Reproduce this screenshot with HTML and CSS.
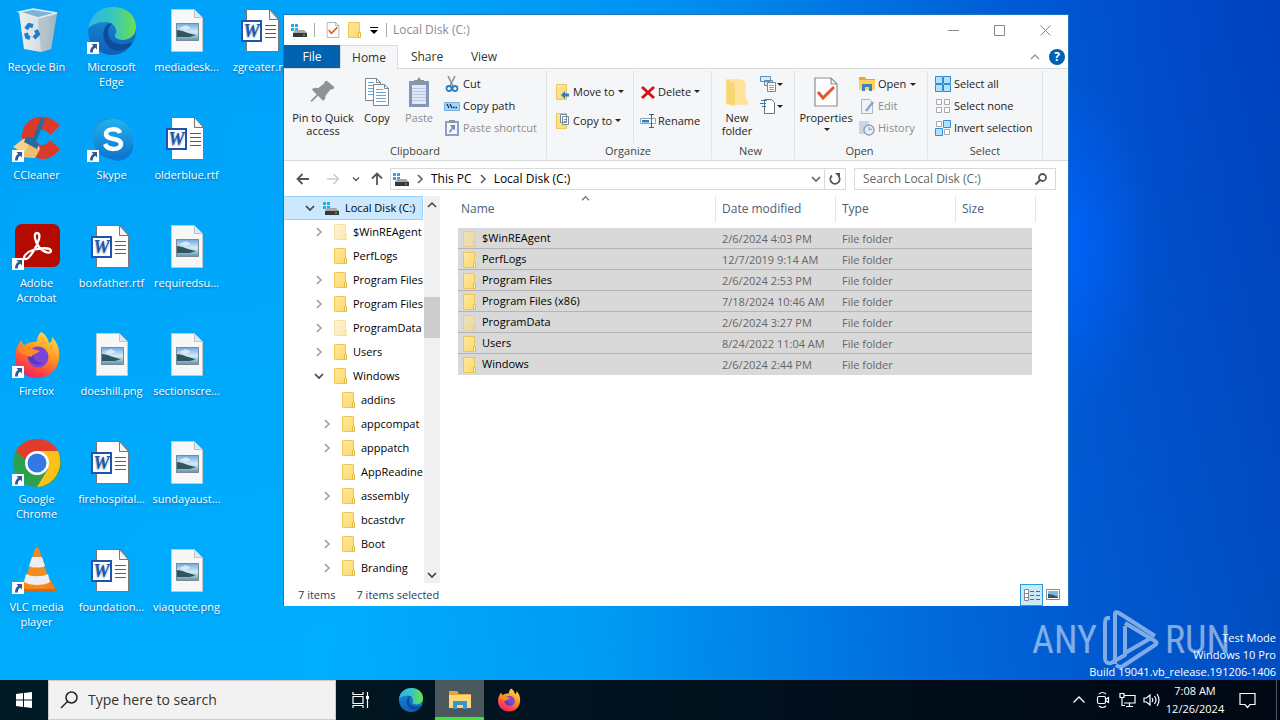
FILE: index.html
```html
<!DOCTYPE html>
<html lang="en">
<head>
<meta charset="utf-8">
<title>Local Disk (C:)</title>
<link rel="stylesheet" href="styles.css">
</head>
<body>
<svg class="sprite" aria-hidden="true">
  <defs>
    <linearGradient id="gEdgeA" x1="0" y1="0" x2="1" y2="0"><stop offset="0" stop-color="#2fb6e8"/><stop offset=".5" stop-color="#37c6c0"/><stop offset="1" stop-color="#6be04a"/></linearGradient>
    <linearGradient id="gEdgeB" x1="0" y1="0" x2="0" y2="1"><stop offset="0" stop-color="#1a8fdc"/><stop offset="1" stop-color="#0f5fb8"/></linearGradient>
    <linearGradient id="gSkype" x1="0" y1="0" x2="0" y2="1"><stop offset="0" stop-color="#22b2ec"/><stop offset="1" stop-color="#0b74cf"/></linearGradient>
    <linearGradient id="gFox" x1=".8" y1="0" x2=".3" y2="1"><stop offset="0" stop-color="#ffe14a"/><stop offset=".45" stop-color="#ff9322"/><stop offset=".75" stop-color="#ff4a3e"/><stop offset="1" stop-color="#e8206e"/></linearGradient>
    <linearGradient id="gFolder" x1="0" y1="0" x2="1" y2="1"><stop offset="0" stop-color="#ffe9a3"/><stop offset="1" stop-color="#fbd867"/></linearGradient>
    <linearGradient id="gPhoto" x1="0" y1="0" x2="0" y2="1"><stop offset="0" stop-color="#6fa8e6"/><stop offset=".5" stop-color="#d6ecf5"/><stop offset="1" stop-color="#5c93ad"/></linearGradient>
    <linearGradient id="gBin" x1="0" y1="0" x2="1" y2="0"><stop offset="0" stop-color="#eceff2"/><stop offset=".65" stop-color="#d3dade"/><stop offset="1" stop-color="#8ea7b5"/></linearGradient>
  </defs>
  <symbol id="arrow-badge" viewBox="0 0 12 12"><path fill="#fff" d="M0 0h12v12H0z"/><path fill="#2d5a9c" d="M4.500 2H10v5.500L8.300 5.800C6.500 6.800 5.800 8 5.800 10.500H3C3 7.500 4 5.500 6.300 3.800z"/></symbol>
  <symbol id="bin" viewBox="0 0 48 48"><path fill="url(#gBin)" d="M6 5l19 5 19-4-6 36-10 3-17-3z"/><path fill="#a8bac4" d="M25 10l19-4-6 36-10 3z" opacity=".7"/><path fill="#7fb4d6" stroke="#e6edf2" stroke-width="1.500" d="M6 5l14-3 24 4-19 5z"/><g fill="none" stroke="#1b7fd0" stroke-width="4"><path d="M13 22l3-4 4 1M23 23l2 4-4 4M17 31l-3-1-1-4"/></g></symbol>
  <symbol id="edge" viewBox="0 0 48 48"><circle cx="24" cy="24" r="24" fill="url(#gEdgeB)"/><path fill="url(#gEdgeA)" d="M0 22C2 8 12 0 25 0c14 0 23 9 23 20 0 8-6 13-13 13-6 0-9-3-8-5 3-3 1-12-9-13-8 0-15 3-18 7z"/><path fill="#0d4c9a" d="M20 17c-7 5-6 17 2 24 5 4 13 4 20-2 2-2 2-4-1-3-10 4-21-1-21-10 0-4 1-7 4-9-1-1-3-1-4 0z"/></symbol>
  <symbol id="word" viewBox="0 0 48 48"><path fill="#fff" stroke="#777" d="M8.500 2.500h23l9 10v32h-32z"/><path fill="#f3f3f3" stroke="#777" d="M31.500 2.500v10h9z"/><path stroke="#2b66b5" stroke-width="1.200" d="M27 18.500h11M27 22.500h11M27 26.500h11M27 30.500h11"/><path fill="#fff" stroke="#1d55ad" stroke-width="2" d="M4 14h19v20H4z"/><text x="13.500" y="30" text-anchor="middle" class="word-letter">W</text></symbol>
  <symbol id="photo" viewBox="0 0 48 48"><path fill="#f7f7f7" stroke="#c2c9cd" d="M8.500 2.500h23l8 8v34h-31z"/><path fill="#dfe8ec" stroke="#b8c4ca" d="M31.500 2.500v8h8z"/><path fill="url(#gPhoto)" stroke="#7d8a93" d="M13.500 16.500h22v17h-22z"/><path fill="#fff" d="M16 21l7-3 5 3-6 2z" opacity=".6"/><path fill="#2f5560" d="M14 23c5 0 12 4 19 5l-6 2H14z"/></symbol>
  <symbol id="ccleaner" viewBox="0 0 48 48"><path fill="#d93a2b" d="M47 11C37-3 11-2 9 20c-1 18 15 27 27 23 5-2 8-5 11-9l-10-9c-5 8-14 6-14-3 0-8 10-10 14-2z"/><path fill="#f7d28c" d="M0 32l10-8c8-1 14 1 17 10l-5 9-13-1-2-6z"/><path fill="#eaaf5a" d="M10 41l6-12 11 5-5 9z" opacity=".6"/><path fill="#276a9d" d="M28 3l4 1-9 23 3 2-2 5-13-7 2-5 7 1z"/></symbol>
  <symbol id="skype" viewBox="0 0 48 48"><circle cx="19" cy="18" r="15" fill="#159be0"/><circle cx="30" cy="31" r="15" fill="#0d79d4"/><circle cx="25" cy="24" r="20" fill="url(#gSkype)"/><path fill="none" stroke="#fff" stroke-width="4.500" d="M32 18c-2-5-14-5-14 1 0 7 15 3 15 10 0 6-13 7-16 0"/></symbol>
  <symbol id="acrobat" viewBox="0 0 48 48"><rect x="2" y="1" width="45" height="43" rx="7" fill="#b30b00"/><path fill="none" stroke="#fff" stroke-width="2.300" d="M24 10c-4 0-2 9 2 14 5 6 12 7 12 4 0-4-12-3-18-1-7 2-11 8-8 9 4 1 12-12 14-20 1-4 0-6-2-6z"/></symbol>
  <symbol id="firefox" viewBox="0 0 48 48"><path fill="url(#gFox)" d="M28 1c4 2 7 6 8 11 3 0 3-4 3-6 6 6 8 13 7 21-1 12-10 20-22 20S2 38 2 26C2 18 5 13 9 9c0 3 1 5 3 5 4-4 9-2 12-4 0-3 1-6 4-9z"/><circle cx="25" cy="26" r="10.500" fill="#7a45d8"/><path fill="#5b34b8" d="M15 25c1 8 10 10 15 7-6 0-10-3-10-8z"/><path fill="#ff8a24" d="M5 17c7-3 14 1 22 3-4 3-7 3-9 6-5-1-10-3-13-9z"/></symbol>
  <symbol id="chrome" viewBox="0 0 48 48"><circle cx="24" cy="24" r="24" fill="#2da04d"/><path fill="#fbc116" d="M24 12h21c7 16-3 35-21 36l11-18z"/><path fill="#e33b2e" d="M3 12C12-4 37-4 45 12H24c-6 0-10 4-11 9z"/><circle cx="24" cy="24" r="12" fill="#fff"/><circle cx="24" cy="24" r="9.500" fill="#3577e5"/></symbol>
  <symbol id="vlc" viewBox="0 0 48 48"><path fill="#f08316" d="M11 32h26l7 13H4z"/><path fill="#d86a0a" d="M4 45l2-3h37l1 3z"/><path fill="#f58a1f" d="M22 2q2-3 4 0l11 35c-4 6-22 6-26 0z"/><path fill="#eee" d="M19 10h10l3 9c-3 2-13 2-16 0zM13 27c6 3 16 3 22 0l2 8c-6 4-20 4-26 0z"/></symbol>
  <symbol id="drive" viewBox="0 0 16 16"><path fill="#1fb0e8" d="M0 2h3v3H0zM4 2h3v3H4zM0 6h3v3H0zM4 6h3v2H4z"/><path fill="#a4a8ab" d="M4 8h9l3 3H2z"/><path fill="#34383b" d="M2 11h14v4H2z"/><path fill="#60d860" d="M12 12.500h2v1h-2z"/></symbol>
  <symbol id="folder" viewBox="0 0 14 16"><path fill="url(#gFolder)" stroke="#edc657" d="M.5.5h11v10l1 1v4H.5z"/><path fill="#fdf3c9" stroke="#e6ba46" d="M10.500 10.500h2v5h-2z"/></symbol>
  <symbol id="sheet-check" viewBox="0 0 24 30"><path fill="#fff" stroke="#8b8f93" stroke-width="1.200" d="M1 1h16l6 6v22H1zM17 1v6h6"/><path fill="none" stroke="#e4572e" stroke-width="3" d="M4 15l5 6L20 10"/></symbol>
  <symbol id="pin" viewBox="0 0 24 24"><path fill="#8b9398" d="M15 3l6 5q0 2-3 2l-4 5q0 3-2 4l-4-4-5 5-1-1 5-5-4-4q2-2 5-1l5-4q0-2 2-2z"/></symbol>
  <symbol id="copy" viewBox="0 0 26 30"><g fill="#fff" stroke="#7e878d"><path d="M1.500 1.500h11l4 4v18h-15zM12.500 1.500v4h4"/><path d="M9.500 7.500h11l4 4v17h-15zM20.500 7.500v4h4"/></g><path stroke="#6fa3dc" d="M4 5.500h6M4 8.500h5M4 11.500h5M4 14.500h5M4 17.500h5M12 12.500h7M12 15.500h10M12 18.500h10M12 21.500h10M12 24.500h10"/></symbol>
  <symbol id="paste" viewBox="0 0 22 30"><path fill="#8296b7" d="M1 4h20v26H1z"/><path fill="#e1e7f4" d="M4 8h14v19H4z"/><path fill="#8b959c" d="M6 3h3l2-3 2 3h3v4H6z"/><path stroke="#b9c7e0" d="M4 11.500h14M4 14.500h14M4 17.500h14M4 20.500h14M4 23.500h14"/></symbol>
  <symbol id="cut" viewBox="0 0 16 16"><path fill="none" stroke="#888f94" stroke-width="1.500" d="M4 0l5 10M11 0L6 10"/><g fill="none" stroke="#2f7fc0" stroke-width="1.800"><circle cx="5" cy="12.500" r="2.500"/><circle cx="11" cy="12.500" r="2.500"/></g></symbol>
  <symbol id="path" viewBox="0 0 16 16"><path fill="#a9d3f5" stroke="#73b2e6" d="M.5 4.500h15v8H.5z"/><path stroke="#16314d" stroke-width="1.300" d="M3 6l2 4M6 6l2 4M9 9.500h1.500M11.500 9.500H13"/></symbol>
  <symbol id="shortcut" viewBox="0 0 16 16"><path fill="none" stroke="#8ba0c2" stroke-width="2" d="M2 2h12v13H2z"/><path fill="#8b959c" d="M5 0h6v3H5z"/><path fill="#6c8dbf" d="M6 5h5v5L9 9l-3 4-1-2 3-3z"/></symbol>
  <symbol id="moveto" viewBox="0 0 16 16"><path fill="url(#gFolder)" stroke="#edc657" d="M1.500.5h10v15h-10z"/><path fill="#2c7fc4" d="M6 11l4-4v2.500h4v3h-4V15z"/></symbol>
  <symbol id="copyto" viewBox="0 0 16 16"><path fill="url(#gFolder)" stroke="#edc657" d="M1.500.5h10v15h-10z"/><path fill="#fff" stroke="#73889a" d="M5.500 1.500h6v8h-6zM7.500 3.500h6v8h-6z"/><path stroke="#5a93cf" d="M9 6.500h3M9 8.500h3"/></symbol>
  <symbol id="delete" viewBox="0 0 16 16"><path fill="none" stroke="#d4151c" stroke-width="3" d="M2 3l12 11M14 3L2 14"/></symbol>
  <symbol id="rename" viewBox="0 0 16 16"><path fill="#fff" stroke="#8fa6b8" d="M.5 5.500h15v5H.5z"/><path fill="#2c7fc4" d="M2 7h7v2.500H2z"/><path fill="none" stroke="#555c61" d="M9 1.500h5M11.500 1.500v13M9 14.500h5"/></symbol>
  <symbol id="bigfolder" viewBox="0 0 24 28"><path fill="#fde49a" d="M2 2h14l4 3v15l2 2v4H2z"/><path fill="#f8d676" d="M2 2l8 4v21l-8-2z"/></symbol>
  <symbol id="newitem" viewBox="0 0 16 16"><path fill="#dcebf7" stroke="#5d8fb5" d="M.5.5h10v5H.5zM4.500 4.500h8v5h-8z"/><path fill="#fff" stroke="#7c868d" d="M7.500 6.500h8v9h-8z"/><path stroke="#9aa3a9" d="M9 9.500h5M9 11.500h5M9 13.500h5"/></symbol>
  <symbol id="easy" viewBox="0 0 16 16"><path fill="#fff" stroke="#6c757b" d="M4.500 1.500h7l3 3v11h-10z"/><path stroke="#2c7fc4" d="M1 2.500h6M0 5.500h6M2 8.500h4"/></symbol>
  <symbol id="open" viewBox="0 0 16 16"><path fill="#e8a824" d="M0 1h6l1 2h9v4H0z"/><path fill="#ffd257" d="M0 4h16v10H0z"/><path fill="#3a82c4" d="M3 8h10v7h-3v-4H6v4H3z"/></symbol>
  <symbol id="edit" viewBox="0 0 16 16"><path fill="#eef2f9" stroke="#a9b6cb" d="M2.500 1.500h8l3 3v11h-11z"/><path stroke="#90a4c6" stroke-width="2.500" d="M14 4l-7 9"/></symbol>
  <symbol id="history" viewBox="0 0 16 16"><path fill="#ccd5e4" d="M0 1h10v13H0z"/><circle cx="10" cy="10" r="5" fill="#e8eef8" stroke="#8fa2c3" stroke-width="1.500"/><path fill="none" stroke="#8094b8" d="M10 7v3l3-1"/></symbol>
  <symbol id="selall" viewBox="0 0 16 16"><path fill="#b5e0fb" stroke="#2b8fd6" d="M.5.5h7v7h-7zM8.500.5h7v7h-7zM.5 8.500h7v7h-7zM8.500 8.500h7v7h-7z"/></symbol>
  <symbol id="selnone" viewBox="0 0 16 16"><path fill="#fff" stroke="#a5a9ac" d="M1.500 1.500h5v5h-5zM9.500 1.500h5v5h-5zM1.500 9.500h5v5h-5zM9.500 9.500h5v5h-5z"/></symbol>
  <symbol id="selinv" viewBox="0 0 16 16"><path fill="#fff" stroke="#a5a9ac" d="M1.500 1.500h5v5h-5zM9.500 9.500h5v5h-5z"/><path fill="#b5e0fb" stroke="#2b8fd6" d="M8.500.5h7v7h-7zM.5 8.500h7v7h-7z"/></symbol>
  <symbol id="chev-r" viewBox="0 0 8 10"><path fill="none" stroke="currentColor" stroke-width="1.700" d="M2 1l4 4-4 4"/></symbol>
  <symbol id="chev-d" viewBox="0 0 10 8"><path fill="none" stroke="currentColor" stroke-width="1.700" d="M1 2l4 4 4-4"/></symbol>
  <symbol id="chev-u" viewBox="0 0 10 8"><path fill="none" stroke="currentColor" stroke-width="1.500" d="M1 6l4-4 4 4"/></symbol>
  <symbol id="left" viewBox="0 0 14 14"><path fill="none" stroke="currentColor" stroke-width="1.800" d="M13 7H2M6.500 2l-5 5 5 5"/></symbol>
  <symbol id="right" viewBox="0 0 14 14"><path fill="none" stroke="currentColor" stroke-width="1.500" d="M1 7h11M7.500 2l5 5-5 5"/></symbol>
  <symbol id="up" viewBox="0 0 14 14"><path fill="none" stroke="currentColor" stroke-width="1.800" d="M7 13V2M2 6.500l5-5 5 5"/></symbol>
  <symbol id="lens" viewBox="0 0 20 20"><circle cx="12.500" cy="7.500" r="5.500" fill="none" stroke="currentColor" stroke-width="1.500"/><path stroke="currentColor" stroke-width="1.500" d="M8.500 11.500L2 18"/></symbol>
  <symbol id="lens-bold" viewBox="0 0 14 14"><circle cx="8.500" cy="5.500" r="3.500" fill="none" stroke="currentColor" stroke-width="1.800"/><path stroke="currentColor" stroke-width="2.200" d="M6 8l-4.500 4.500"/></symbol>
  <symbol id="explorer" viewBox="0 0 24 24"><path fill="#e8a33a" d="M1 3h8l2 3h12v5H1z"/><path fill="#ffd977" d="M1 7h22v13H1z"/><path fill="#3a94cc" d="M5 13h14v8h-4v-4H9v4H5z"/></symbol>
</svg>

<main class="desktop">
  <div class="shortcuts">
    <a class="shortcut" href="#"><svg class="ico48"><use href="#bin"/></svg><span>Recycle Bin</span></a>
    <a class="shortcut" href="#"><svg class="ico48"><use href="#ccleaner"/></svg><svg class="badge"><use href="#arrow-badge"/></svg><span>CCleaner</span></a>
    <a class="shortcut" href="#"><svg class="ico48"><use href="#acrobat"/></svg><svg class="badge"><use href="#arrow-badge"/></svg><span>Adobe Acrobat</span></a>
    <a class="shortcut" href="#"><svg class="ico48"><use href="#firefox"/></svg><svg class="badge"><use href="#arrow-badge"/></svg><span>Firefox</span></a>
    <a class="shortcut" href="#"><svg class="ico48"><use href="#chrome"/></svg><svg class="badge"><use href="#arrow-badge"/></svg><span>Google Chrome</span></a>
    <a class="shortcut" href="#"><svg class="ico48"><use href="#vlc"/></svg><svg class="badge"><use href="#arrow-badge"/></svg><span>VLC media player</span></a>
    <a class="shortcut" href="#"><svg class="ico48"><use href="#edge"/></svg><svg class="badge"><use href="#arrow-badge"/></svg><span>Microsoft Edge</span></a>
    <a class="shortcut" href="#"><svg class="ico48"><use href="#skype"/></svg><svg class="badge"><use href="#arrow-badge"/></svg><span>Skype</span></a>
    <a class="shortcut" href="#"><svg class="ico48"><use href="#word"/></svg><span>boxfather.rtf</span></a>
    <a class="shortcut" href="#"><svg class="ico48"><use href="#photo"/></svg><span>doeshill.png</span></a>
    <a class="shortcut" href="#"><svg class="ico48"><use href="#word"/></svg><span>firehospital...</span></a>
    <a class="shortcut" href="#"><svg class="ico48"><use href="#word"/></svg><span>foundation...</span></a>
    <a class="shortcut" href="#"><svg class="ico48"><use href="#photo"/></svg><span>mediadesk...</span></a>
    <a class="shortcut" href="#"><svg class="ico48"><use href="#word"/></svg><span>olderblue.rtf</span></a>
    <a class="shortcut" href="#"><svg class="ico48"><use href="#photo"/></svg><span>requiredsu...</span></a>
    <a class="shortcut" href="#"><svg class="ico48"><use href="#photo"/></svg><span>sectionscre...</span></a>
    <a class="shortcut" href="#"><svg class="ico48"><use href="#photo"/></svg><span>sundayaust...</span></a>
    <a class="shortcut" href="#"><svg class="ico48"><use href="#photo"/></svg><span>viaquote.png</span></a>
    <a class="shortcut" href="#"><svg class="ico48"><use href="#word"/></svg><span>zgreater.rtf</span></a>
  </div>

  <div class="watermark">
    <span>ANY</span>
    <svg viewBox="0 0 56 60" class="wm-logo"><g fill="none" stroke="#fff" stroke-width="4" stroke-linejoin="round"><path d="M7 8H4Q2 9 2 14v34q0 6 6 5l14-8V16"/><path d="M12 54V4q0-3 4-1l36 23M13 55q3 3 7 1l32-21q3-2 0-4L22 13"/><path d="M22 43l26-15"/></g></svg>
    <span>RUN</span>
  </div>
  <div class="build"><div>Test Mode</div><div>Windows 10 Pro</div><div>Build 19041.vb_release.191206-1406</div></div>

  <section class="window">
    <header class="titlebar">
      <svg class="ico16"><use href="#drive"/></svg><i class="bar"></i>
      <button class="quick" aria-label="Properties"><svg class="ico16"><use href="#sheet-check"/></svg></button>
      <button class="quick" aria-label="New folder"><svg class="ico16"><use href="#folder"/></svg></button>
      <button class="quick small" aria-label="Customize"><svg width="8" height="8" viewBox="0 0 8 8"><path d="M0 1h8v1H0zM0 4h8L4 8z"/></svg></button><i class="bar"></i>
      <h1>Local Disk (C:)</h1>
      <div class="controls">
        <button aria-label="Minimize"><svg width="11" height="11" viewBox="0 0 11 11"><path stroke="#888" d="M0 5.500h11"/></svg></button>
        <button aria-label="Maximize"><svg width="11" height="11" viewBox="0 0 11 11"><path fill="none" stroke="#888" d="M.5.5h10v10H.5z"/></svg></button>
        <button aria-label="Close"><svg width="11" height="11" viewBox="0 0 11 11"><path stroke="#888" d="M.5.5l10 10M10.500.5l-10 10"/></svg></button>
      </div>
    </header>
    <nav class="tabs">
      <button class="tab file">File</button><button class="tab active">Home</button><button class="tab share">Share</button><button class="tab">View</button>
      <span class="tabs-right"><button aria-label="Collapse"><svg class="chev-h"><use href="#chev-u"/></svg></button><button class="help" aria-label="Help">?</button></span>
    </nav>

    <div class="ribbon">
      <section class="group clipboard"><div class="tools">
        <button class="big"><svg width="30" height="30"><use href="#pin"/></svg><span>Pin to Quick access</span></button>
        <button class="big"><svg width="26" height="30"><use href="#copy"/></svg><span>Copy</span></button>
        <button class="big off"><svg width="22" height="30"><use href="#paste"/></svg><span>Paste</span></button>
        <div class="stack"><button><svg class="ico16"><use href="#cut"/></svg>Cut</button><button><svg class="ico16"><use href="#path"/></svg>Copy path</button><button class="off"><svg class="ico16"><use href="#shortcut"/></svg>Paste shortcut</button></div>
      </div><h2>Clipboard</h2></section>
      <section class="group organize"><div class="tools">
        <div class="stack wide"><button><svg class="ico16"><use href="#moveto"/></svg>Move to<i class="caret"></i></button><button><svg class="ico16"><use href="#copyto"/></svg>Copy to<i class="caret"></i></button></div>
        <div class="stack wide split"><button><svg class="ico16"><use href="#delete"/></svg>Delete<i class="caret"></i></button><button><svg class="ico16"><use href="#rename"/></svg>Rename</button></div>
      </div><h2>Organize</h2></section>
      <section class="group new"><div class="tools">
        <button class="big"><svg width="26" height="30"><use href="#bigfolder"/></svg><span>New folder</span></button>
        <div class="stack"><button aria-label="New item"><svg class="ico16"><use href="#newitem"/></svg><i class="caret"></i></button><button aria-label="Easy access"><svg class="ico16"><use href="#easy"/></svg><i class="caret"></i></button></div>
      </div><h2>New</h2></section>
      <section class="group open"><div class="tools">
        <button class="big"><svg width="24" height="30"><use href="#sheet-check"/></svg><span>Properties</span><i class="caret"></i></button>
        <div class="stack"><button><svg class="ico16"><use href="#open"/></svg>Open<i class="caret"></i></button><button class="off"><svg class="ico16"><use href="#edit"/></svg>Edit</button><button class="off"><svg class="ico16"><use href="#history"/></svg>History</button></div>
      </div><h2>Open</h2></section>
      <section class="group select"><div class="tools">
        <div class="stack"><button><svg class="ico16"><use href="#selall"/></svg>Select all</button><button><svg class="ico16"><use href="#selnone"/></svg>Select none</button><button><svg class="ico16"><use href="#selinv"/></svg>Invert selection</button></div>
      </div><h2>Select</h2></section>
    </div>

    <div class="location">
      <div class="nav">
        <button aria-label="Back"><svg class="ico14"><use href="#left"/></svg></button>
        <button aria-label="Forward" class="faint"><svg class="ico14"><use href="#right"/></svg></button>
        <button aria-label="Recent"><svg class="chev-s"><use href="#chev-d"/></svg></button>
        <button aria-label="Up"><svg class="ico14"><use href="#up"/></svg></button>
      </div>
      <div class="address">
        <svg class="ico16"><use href="#drive"/></svg><svg class="chev-v"><use href="#chev-r"/></svg><a href="#">This PC</a><svg class="chev-v"><use href="#chev-r"/></svg><a href="#">Local Disk (C:)</a>
        <button class="drop" aria-label="Previous locations"><svg class="chev-h"><use href="#chev-d"/></svg></button>
        <button class="refresh" aria-label="Refresh"><svg width="12" height="12" viewBox="0 0 12 12"><path fill="none" stroke="#555" stroke-width="1.700" d="M3 2.500A4.700 4.700 0 1 0 9.500 3"/><path fill="#555" d="M6 0h5v5z"/></svg></button>
      </div>
      <div class="search"><input type="text" aria-label="Search Local Disk (C:)" placeholder="Search Local Disk (C:)"><svg width="14" height="14"><use href="#lens-bold"/></svg></div>
    </div>

    <div class="body">
      <ul class="tree">
        <li class="root"><svg class="chev-h"><use href="#chev-d"/></svg><svg class="ico16"><use href="#drive"/></svg>Local Disk (C:)</li>
        <li><svg class="chev-v"><use href="#chev-r"/></svg><svg class="fold hidden-dir"><use href="#folder"/></svg>$WinREAgent</li>
        <li><i class="chev-v"></i><svg class="fold"><use href="#folder"/></svg>PerfLogs</li>
        <li><svg class="chev-v"><use href="#chev-r"/></svg><svg class="fold"><use href="#folder"/></svg>Program Files</li>
        <li><svg class="chev-v"><use href="#chev-r"/></svg><svg class="fold"><use href="#folder"/></svg>Program Files (x86)</li>
        <li><svg class="chev-v"><use href="#chev-r"/></svg><svg class="fold hidden-dir"><use href="#folder"/></svg>ProgramData</li>
        <li><svg class="chev-v"><use href="#chev-r"/></svg><svg class="fold"><use href="#folder"/></svg>Users</li>
        <li class="expanded"><svg class="chev-h"><use href="#chev-d"/></svg><svg class="fold"><use href="#folder"/></svg>Windows</li>
        <li class="deep"><i class="chev-v"></i><svg class="fold"><use href="#folder"/></svg>addins</li>
        <li class="deep"><svg class="chev-v"><use href="#chev-r"/></svg><svg class="fold"><use href="#folder"/></svg>appcompat</li>
        <li class="deep"><svg class="chev-v"><use href="#chev-r"/></svg><svg class="fold"><use href="#folder"/></svg>apppatch</li>
        <li class="deep"><i class="chev-v"></i><svg class="fold"><use href="#folder"/></svg>AppReadiness</li>
        <li class="deep"><svg class="chev-v"><use href="#chev-r"/></svg><svg class="fold"><use href="#folder"/></svg>assembly</li>
        <li class="deep"><i class="chev-v"></i><svg class="fold"><use href="#folder"/></svg>bcastdvr</li>
        <li class="deep"><svg class="chev-v"><use href="#chev-r"/></svg><svg class="fold"><use href="#folder"/></svg>Boot</li>
        <li class="deep"><svg class="chev-v"><use href="#chev-r"/></svg><svg class="fold"><use href="#folder"/></svg>Branding</li>
      </ul>
      <div class="scroll">
        <button aria-label="Scroll up"><svg class="chev-h"><use href="#chev-u"/></svg></button>
        <div class="track"><div class="thumb"></div></div>
        <button aria-label="Scroll down"><svg class="chev-h"><use href="#chev-d"/></svg></button>
      </div>
      <div class="list">
        <svg class="sort"><use href="#chev-u"/></svg>
        <table>
          <colgroup><col><col class="c-date"><col class="c-type"><col class="c-size"></colgroup>
          <thead><tr><th>Name</th><th>Date modified</th><th>Type</th><th>Size</th></tr></thead>
          <tbody>
            <tr><td><svg class="fold hidden-dir"><use href="#folder"/></svg>$WinREAgent</td><td>2/6/2024 4:03 PM</td><td>File folder</td><td></td></tr>
            <tr><td><svg class="fold"><use href="#folder"/></svg>PerfLogs</td><td>12/7/2019 9:14 AM</td><td>File folder</td><td></td></tr>
            <tr><td><svg class="fold"><use href="#folder"/></svg>Program Files</td><td>2/6/2024 2:53 PM</td><td>File folder</td><td></td></tr>
            <tr><td><svg class="fold"><use href="#folder"/></svg>Program Files (x86)</td><td>7/18/2024 10:46 AM</td><td>File folder</td><td></td></tr>
            <tr><td><svg class="fold hidden-dir"><use href="#folder"/></svg>ProgramData</td><td>2/6/2024 3:27 PM</td><td>File folder</td><td></td></tr>
            <tr><td><svg class="fold"><use href="#folder"/></svg>Users</td><td>8/24/2022 11:04 AM</td><td>File folder</td><td></td></tr>
            <tr><td><svg class="fold"><use href="#folder"/></svg>Windows</td><td>2/6/2024 2:44 PM</td><td>File folder</td><td></td></tr>
          </tbody>
        </table>
      </div>
    </div>

    <footer class="status"><span>7 items</span><span>7 items selected</span>
      <div class="views">
        <button class="on" aria-label="Details view"><svg width="16" height="14" viewBox="0 0 16 14"><path fill="#fff" stroke="#888" d="M.5 1.500h4v11h-4zM.5 5.500h4M.5 9.500h4"/><path stroke="#666" d="M6 3.500h4M12 3.500h4M6 7.500h4M12 7.500h4M6 11.500h4M12 11.500h4"/></svg></button>
        <button aria-label="Large icons view"><svg width="14" height="11" viewBox="0 0 14 11"><path fill="#fff" stroke="#888" d="M.5.5h13v10H.5z"/><path fill="#7fb7e8" d="M2 2h10v7H2z"/><path fill="#2e5568" d="M2 5q5 0 10 3v1H2z"/></svg></button>
      </div>
    </footer>
  </section>
</main>

<footer class="taskbar">
  <button class="task start" aria-label="Start"><svg width="16" height="16" viewBox="0 0 16 16"><path fill="#fff" d="M0 2l7-1v6.500H0zM8 1l8-1v7.500H8zM0 8.500h7V15l-7-1zM8 8.500h8V16l-8-1z"/></svg></button>
  <div class="tasksearch"><svg width="20" height="20"><use href="#lens"/></svg><input type="text" aria-label="Type here to search" placeholder="Type here to search"></div>
  <button class="task view" aria-label="Task View"><svg width="18" height="16" viewBox="0 0 18 16"><path fill="none" stroke="#fff" stroke-width="1.200" d="M1 0v2.500h10V0M1 4.500h10v7H1zM1 16v-2.500h10V16M15.500 0v16"/><path fill="#fff" d="M14 4h3v3h-3z"/></svg></button>
  <button class="task" aria-label="Edge"><svg class="ico24"><use href="#edge"/></svg></button>
  <button class="task running" aria-label="File Explorer"><svg class="ico24"><use href="#explorer"/></svg></button>
  <button class="task" aria-label="Firefox"><svg class="ico24"><use href="#firefox"/></svg></button>
  <div class="tray">
    <button aria-label="Hidden icons"><svg width="14" height="10" viewBox="0 0 14 10"><path fill="none" stroke="#fff" stroke-width="1.300" d="M1.500 7.500L7 2l5.500 5.500"/></svg></button>
    <button aria-label="Meet Now"><svg width="14" height="18" viewBox="0 0 14 18"><g fill="none" stroke="#fff" stroke-width="1.200"><rect x="1.500" y="5.500" width="8" height="7" rx="1.500"/><path d="M9.500 8.500l3-2v5l-3-2M3 3q3.500-3 7 0M3 15q3.500 3 7 0"/></g></svg></button>
    <button aria-label="Network"><svg width="17" height="16" viewBox="0 0 17 16"><path fill="none" stroke="#fff" stroke-width="1.200" d="M5 3.500h11v7.500H5M1 1.500h4v4H1zM3 5.500v8h3M10.500 11v3M7 14.500h7"/></svg></button>
    <button aria-label="Volume"><svg width="17" height="14" viewBox="0 0 17 14"><path fill="none" stroke="#fff" stroke-width="1.200" d="M1 5v4h2.500L7 12V2L3.500 5zM9 5q1.500 2 0 4M11.500 3q3 4 0 8M14 1q4 6 0 12"/></svg></button>
    <div class="clock"><time>7:08 AM</time><time>12/26/2024</time></div>
    <button class="notes" aria-label="Notifications"><svg width="17" height="17" viewBox="0 0 17 17"><path fill="none" stroke="#fff" stroke-width="1.200" d="M1 1.500h15v11h-5l-2.500 3-2.500-3H1z"/></svg></button>
    <button class="peek" aria-label="Show desktop"></button>
  </div>
</footer>
</body>
</html>
```
FILE: styles.css
```css
* { box-sizing: border-box; }
body {
  margin: 0;
  height: 100vh;
  display: flex;
  flex-direction: column;
  overflow: hidden;
  font: 12px/16px "Open Sans", "Noto Sans", sans-serif;
  color: #000;
}
button {
  border: 0;
  padding: 0;
  background: none;
  font: inherit;
  color: inherit;
  display: flex;
  align-items: center;
  justify-content: center;
}
a { color: inherit; text-decoration: none; }
svg { flex: none; display: block; }
input { font: inherit; border: 0; outline: 0; background: none; min-width: 0; }
.sprite { position: absolute; width: 0; height: 0; }
.ico14 { width: 14px; height: 14px; }
.ico16 { width: 16px; height: 16px; }
.ico24 { width: 24px; height: 24px; }
.ico48 { width: 48px; height: 48px; }
.fold { width: 14px; height: 16px; }
.hidden-dir { opacity: .5; }
.chev-v { width: 8px; height: 10px; }
.chev-h { width: 10px; height: 8px; }
.chev-s { width: 8px; height: 6px; }
.word-letter { font: italic bold 18px "Liberation Serif", serif; fill: #1d55ad; }

/* Desktop */
.desktop {
  flex: 1;
  min-height: 0;
  position: relative;
  overflow: hidden;
  background:
    radial-gradient(ellipse 90px 170px at 83% 36%, rgba(0, 100, 255, .9) 0%, rgba(0, 90, 240, 0) 100%),
    linear-gradient(175deg, rgba(0, 60, 200, .08), rgba(0, 190, 255, .16)),
    linear-gradient(97deg, #00aafc 0%, #00acff 30%, #0096f2 50%, #005cd6 74%, #0048c8 86%, #0038b4 100%);
}
.shortcuts {
  display: grid;
  grid-auto-flow: column;
  grid-template-rows: repeat(6, 108px);
  grid-auto-columns: 75px;
  justify-content: start;
  margin-left: -1px;
}
.shortcut {
  position: relative;
  display: flex;
  flex-direction: column;
  align-items: center;
  gap: 4px;
  padding-top: 7px;
  color: #fff;
  line-height: 15px;
  font-size: 11px;
  text-align: center;
  text-shadow: 0 1px 2px rgba(0, 40, 90, .5);
}
.badge { position: absolute; left: 13px; top: 42px; width: 12px; height: 12px; }
.watermark {
  position: absolute;
  right: 50px;
  bottom: 10px;
  display: flex;
  align-items: center;
  gap: 6px;
  color: #fff;
  opacity: .5;
  font: 38px/60px "Liberation Sans Narrow", "Roboto Condensed", sans-serif;
}
.wm-logo { width: 56px; height: 60px; }
.build {
  position: absolute;
  right: 4px;
  bottom: 0;
  color: #fff;
  font-size: 11px;
  line-height: 17px;
  text-align: right;
}

/* Explorer window */
.window {
  position: absolute;
  inset: 14px 211px 74px 283px;
  display: flex;
  flex-direction: column;
  background: #fff;
  border: 1px solid #1d75bf;
  border-bottom: 0;
}
.titlebar { display: flex; align-items: center; height: 30px; padding-left: 7px; }
.bar { width: 1px; height: 14px; background: #aaa; margin: 0 7px; }
.titlebar .bar:first-of-type { margin-right: 10px; }
.quick { width: 16px; margin-right: 6px; }
.quick.small { width: 10px; margin-right: 0; }
.quick.small + .bar { margin-right: 6px; }
h1 { margin: 0; font-size: 12px; font-weight: 400; color: #8c8c8c; }
.controls { margin-left: auto; display: flex; }
.controls button { width: 46px; height: 30px; }
.tabs { display: flex; height: 24px; border-bottom: 1px solid #dadbdc; }
.tab { width: 56px; height: 23px; color: #333; }
.tab.share { width: 58px; }
.tab.file { background: #0063b1; color: #fff; }
.tab.active { width: 58px; height: 24px; background: #f5f6f7; border: 1px solid #dadbdc; border-bottom: 0; }
.tabs-right { margin-left: auto; display: flex; align-items: center; gap: 9px; padding-right: 3px; color: #999; }
.help { width: 16px; height: 16px; border-radius: 50%; background: #0063b1; color: #fff; font-weight: 700; }

.ribbon { display: flex; height: 92px; background: #f5f6f7; border-bottom: 1px solid #dadbdc; color: #222; }
.group { display: flex; flex-direction: column; border-right: 1px solid #e2e3e4; margin: 2px 0 1px; }
.clipboard { width: 263px; padding-left: 7px; }
.organize { width: 165px; padding-left: 8px; }
.new { width: 83px; padding-left: 2px; }
.open { width: 133px; padding-left: 4px; }
.select { width: 115px; padding-left: 7px; }
.group h2 { margin: 0; font-size: 11px; font-weight: 400; line-height: 16px; text-align: center; color: #444; }
.organize h2 { padding-right: 10px; }
.clipboard h2, .open h2, .select h2, .new h2 { padding-right: 7px; }
.tools { display: flex; flex: 1; }
.big { flex-direction: column; justify-content: flex-start; width: 42px; padding-top: 6px; gap: 4px; line-height: 13px; font-size: 11px; }
.clipboard .big:first-child { width: 64px; margin-right: 1px; }
.clipboard .big:nth-child(3) { margin-right: 4px; }
.new .big { width: 46px; }
.open .big { width: 54px; margin-right: 6px; }
.off { color: #8c8c8c; }
.stack { display: flex; flex-direction: column; align-items: flex-start; padding-top: 2px; font-size: 11px; white-space: nowrap; }
.stack button { height: 22px; gap: 3px; }
.new .stack button { gap: 0; }
.stack.wide { padding-top: 6px; width: 78px; }
.stack.wide button { height: 29px; gap: 2px; }
.stack.split { border-left: 1px solid #e2e3e4; padding-left: 6px; }
.caret { border: 3px solid transparent; border-top-color: #222; border-bottom: 0; margin-left: 1px; }

.location { display: flex; align-items: center; height: 35px; padding-right: 12px; }
.nav { display: grid; grid-template-columns: 34px 26px 20px 22px; width: 106px; padding-left: 2px; color: #555; }
.nav .faint { color: #ccc; }
.address { flex: 1; display: flex; align-items: center; gap: 7px; height: 22px; border: 1px solid #d9d9d9; padding-left: 2px; margin-right: 8px; }
.address svg { color: #666; }
.address .drop { margin-left: auto; margin-right: -4px; }
.address .refresh { width: 21px; height: 20px; border-left: 1px solid #d9d9d9; }
.search { width: 202px; height: 22px; border: 1px solid #d9d9d9; display: flex; align-items: center; padding: 0 7px 0 8px; color: #555; }
.search input { flex: 1; padding: 0; }
.search input::placeholder { color: #666; opacity: 1; }

.body { display: flex; flex: 1; min-height: 0; }
.tree { width: 140px; margin: 0; padding: 0 1px 0 0; list-style: none; overflow: hidden; white-space: nowrap; font-size: 11px; }
.tree li { display: flex; align-items: center; height: 24px; padding-left: 31px; overflow: hidden; }
.tree .chev-v { margin-right: 11px; color: #a0a0a0; flex: none; }
.tree .chev-h { color: #444; }
.tree .fold { margin-right: 5px; }
.tree .deep { padding-left: 39px; }
.tree .expanded { padding-left: 30px; }
.tree .expanded .chev-h { margin-right: 10px; }
.tree .root { padding-left: 21px; background: #cce8ff; border: 1px solid #99d1ff; border-left: 0; }
.tree .root .chev-h { margin-right: 8px; }
.tree .root .ico16 { margin-right: 6px; }
.scroll { width: 16px; display: flex; flex-direction: column; background: #f0f0f0; color: #444; }
.scroll button { height: 17px; }
.track { flex: 1; padding-top: 84px; }
.thumb { height: 41px; background: #cdcdcd; }
.list { flex: 1; position: relative; padding: 0 32px 0 18px; }
.sort { position: absolute; left: 141px; top: -1px; width: 9px; height: 7px; color: #777; }
table { width: 100%; border-spacing: 0; table-layout: fixed; }
.c-date, .c-type { width: 120px; }
.c-size { width: 80px; }
th { height: 26px; padding: 0 0 0 6px; text-align: left; font-weight: 400; color: #4c607a; border-right: 1px solid #e5e5e5; }
th:first-child { padding-left: 3px; }
thead::after { content: ""; display: block; height: 6px; }
td { height: 21px; padding: 0 0 0 6px; line-height: 16px; font-size: 11px; background: linear-gradient(#d9d9d9 20px, #b4b4b4 20px); color: #666; }
td:first-child { color: #000; padding-left: 5px; }
td:last-child { background-size: calc(100% - 4px) 100%; background-repeat: no-repeat; }
tr:last-child td { background-image: linear-gradient(#d9d9d9, #d9d9d9); }
td .fold { display: inline-block; vertical-align: middle; margin-right: 5px; }
.status { display: flex; align-items: center; height: 23px; padding-left: 14px; gap: 21px; font-size: 11px; color: #1e395b; }
.views { margin-left: auto; display: flex; gap: 3px; padding-right: 8px; }
.views button { height: 22px; width: 14px; }
.views .on { width: 23px; background: #cbe8f6; border: 1px solid #26a0da; }

/* Taskbar */
.taskbar { height: 40px; display: flex; background: linear-gradient(90deg, #001b24, #00101c 60%, #000814); color: #fff; }
.task { width: 49px; }
.task.start { width: 48px; }
.task.view { width: 50px; }
.running { background: #4b595e; border-bottom: 3px solid #42e23a; padding-top: 3px; }
.tasksearch { width: 288px; background: #f2f2f2; border: 1px solid #ccc; display: flex; align-items: center; padding-left: 10px; gap: 9px; color: #222; }
.tasksearch input { flex: 1; padding: 0; font-size: 14px; line-height: 20px; }
.tasksearch input::placeholder { color: #333; opacity: 1; }
.tray { margin-left: auto; display: flex; align-items: stretch; }
.tray button { width: 24px; }
.clock { width: 64px; display: flex; flex-direction: column; justify-content: center; text-align: center; line-height: 18px; font-size: 11px; }
.tray .notes { width: 40px; margin-right: 9px; }
.tray .peek { width: 4px; border-left: 1px solid #556; }
```
